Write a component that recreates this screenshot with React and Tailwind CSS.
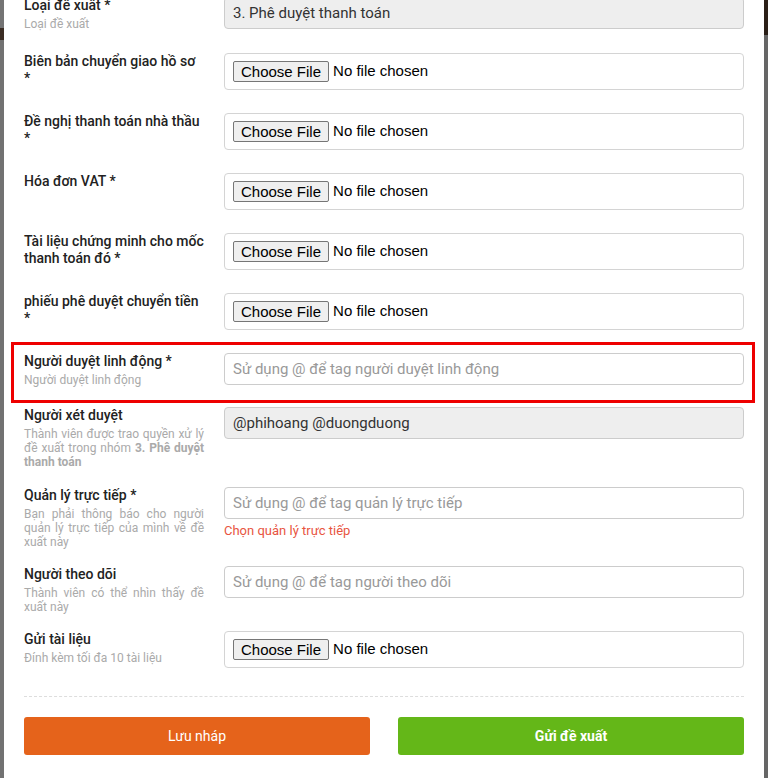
import React from "react";

const fileRows = [
  "Biên bản chuyển giao hồ sơ *",
  "Đề nghị thanh toán nhà thầu *",
  "Hóa đơn VAT *",
  "Tài liệu chứng minh cho mốc thanh toán đó *",
  "phiếu phê duyệt chuyển tiền *",
];

const Label = ({ title, sub }) => (
  <div className="w-[180px] shrink-0">
    <div className="text-[14px] leading-[17px] font-medium text-[#222]">{title}</div>
    {sub && (
      <div className="mt-[3px] text-[12px] leading-[14px] text-[#aaa] text-justify">{sub}</div>
    )}
  </div>
);

const FileBox = () => (
  <div className="flex-1 h-[37px] border border-[#d4d4d4] rounded-[4px] flex items-center pl-[8px] font-['Liberation_Sans',Arial,sans-serif] text-[15px] text-black">
    <span className="h-[21px] px-[7px] flex items-center border border-[#767676] bg-[#efefef] rounded-[2px] leading-none">
      Choose File
    </span>
    <span className="ml-[4px]">No file chosen</span>
  </div>
);

const TextBox = ({ placeholder, value, disabled }) => (
  <div
    className={`h-[32px] border border-[#ccc] rounded-[4px] flex items-center px-[8px] text-[15px] ${
      disabled ? "bg-[#eee] text-[#333]" : "bg-white text-[#999]"
    }`}
  >
    {value || placeholder}
  </div>
);

export default function App() {
  return (
    <div className="w-[768px] h-[778px] overflow-hidden flex bg-[#6e6e6e] font-['Roboto','Noto_Sans',sans-serif]">
      {/* overlay strip left */}
      <div className="w-[4px] shrink-0 flex flex-col">
        <div className="h-[28px] bg-[#747474]"></div>
        <div className="h-[12px] bg-[#3b2d24]"></div>
        <div className="flex-1 bg-[#727272]"></div>
      </div>

      {/* modal */}
      <div className="w-[760px] shrink-0 bg-white px-[20px]">
        <div className="flex gap-[20px] -mt-[3px] mb-[22px]">
          <Label title="Loại đề xuất *" sub="Loại đề xuất" />
          <div className="flex-1">
            <TextBox value="3. Phê duyệt thanh toán" disabled />
          </div>
        </div>

        {fileRows.map((t, i) => (
          <div key={i} className="flex gap-[20px] mb-[23px]">
            <Label title={t} />
            <FileBox />
          </div>
        ))}

        <div className="relative flex gap-[20px] mb-[20px]">
          <div className="absolute -top-[11px] -left-[13px] -right-[11px] -bottom-[16px] border-[3px] border-[#ee0000] pointer-events-none"></div>
          <Label title="Người duyệt linh động *" sub="Người duyệt linh động" />
          <div className="flex-1">
            <TextBox placeholder="Sử dụng @ để tag người duyệt linh động" />
          </div>
        </div>

        <div className="flex gap-[20px] mb-[18px]">
          <Label
            title="Người xét duyệt"
            sub={
              <>
                Thành viên được trao quyền xử lý đề xuất trong nhóm <b>3. Phê duyệt thanh toán</b>
              </>
            }
          />
          <div className="flex-1">
            <TextBox value="@phihoang @duongduong" disabled />
          </div>
        </div>

        <div className="flex gap-[20px] mb-[17px]">
          <Label
            title="Quản lý trực tiếp *"
            sub="Bạn phải thông báo cho người quản lý trực tiếp của mình về đề xuất này"
          />
          <div className="flex-1">
            <TextBox placeholder="Sử dụng @ để tag quản lý trực tiếp" />
            <div className="mt-[4px] text-[13px] leading-[16px] text-[#e8553f]">Chọn quản lý trực tiếp</div>
          </div>
        </div>

        <div className="flex gap-[20px] mb-[17px]">
          <Label title="Người theo dõi" sub="Thành viên có thể nhìn thấy đề xuất này" />
          <div className="flex-1">
            <TextBox placeholder="Sử dụng @ để tag người theo dõi" />
          </div>
        </div>

        <div className="flex gap-[20px]">
          <Label title="Gửi tài liệu" sub="Đính kèm tối đa 10 tài liệu" />
          <FileBox />
        </div>

        <div className="mt-[28px] border-t border-dashed border-[#ddd]"></div>

        <div className="mt-[20px] flex gap-[28px]">
          <button className="flex-1 h-[38px] rounded-[3px] bg-[#e5631b] text-white text-[14px]">
            Lưu nháp
          </button>
          <button className="flex-1 h-[38px] rounded-[3px] bg-[#64b718] text-white text-[14px] font-bold">
            Gửi đề xuất
          </button>
        </div>
      </div>

      {/* overlay strip right */}
      <div className="w-[4px] shrink-0 flex flex-col">
        <div className="h-[35px] bg-[#2b2018]"></div>
        <div className="flex-1 bg-[#666]"></div>
      </div>
    </div>
  );
}
